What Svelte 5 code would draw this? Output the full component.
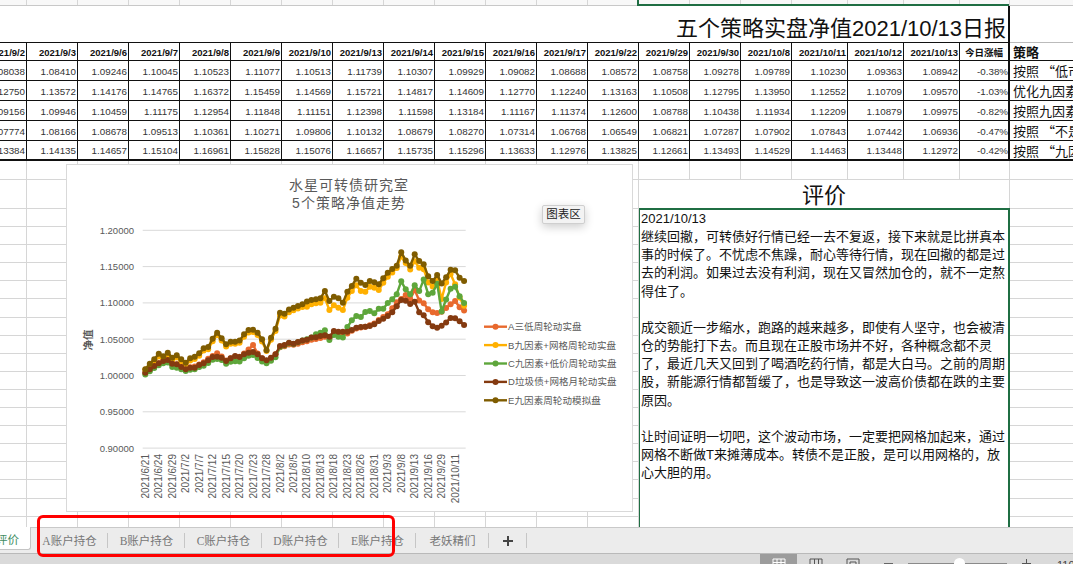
<script>
	const dates = ['9/2','9/3','9/6','9/7','9/8','9/9','9/10','9/13','9/14','9/15','9/16','9/17','9/22','9/29','9/30','10/8','10/11','10/12','10/13'];

	const rows = [
		{ name: 'A三低周轮动实盘', color: '#e8692d', change: '-0.38%', note: '按照 “低市值', values: [1.08038,1.0841,1.09246,1.10045,1.10523,1.11077,1.10513,1.11739,1.10307,1.09929,1.09082,1.08688,1.08572,1.08758,1.09278,1.09789,1.1023,1.09363,1.08942],
			early: [1.003,1.0085,1.013,1.0165,1.0195,1.0205,1.0155,1.015,1.0115,1.0085,1.011,1.012,1.015,1.018,1.0229,1.0265,1.0302,1.026,1.0205,1.0235,1.026,1.0255,1.03,1.0357,1.0417,1.03,1.0235,1.02,1.024,1.029,1.0385,1.04,1.0425,1.042,1.0435,1.0455,1.047,1.049,1.05,1.0515,1.053,1.051,1.058,1.0575,1.057,1.0575,1.0615,1.0645,1.066,1.067,1.069,1.0715,1.076] },
		{ name: 'B九因素+网格周轮动实盘', color: '#ffb000', change: '-1.03%', note: '优化九因素', values: [1.1275,1.13572,1.14176,1.14765,1.16372,1.15459,1.14569,1.15721,1.14817,1.14609,1.1277,1.1224,1.13163,1.10508,1.12795,1.1395,1.12552,1.10709,1.0957],
			early: [1.008,1.013,1.019,1.026,1.023,1.0275,1.0215,1.0245,1.0195,1.0155,1.0205,1.0225,1.027,1.034,1.036,1.047,1.0555,1.048,1.0395,1.0435,1.0435,1.045,1.053,1.059,1.0595,1.0555,1.0465,1.0335,1.049,1.061,1.0825,1.081,1.087,1.0895,1.092,1.094,1.0945,1.0978,1.0991,1.1001,1.106,1.09,1.0964,1.0932,1.09,1.1069,1.1161,1.1239,1.1161,1.1152,1.1221,1.1207,1.1175] },
		{ name: 'C九因素+低价周轮动实盘', color: '#5ea63b', change: '-0.82%', note: '按照九因素', values: [1.09156,1.09946,1.10459,1.11175,1.12954,1.11848,1.11151,1.12398,1.11598,1.13184,1.11167,1.11374,1.126,1.08788,1.10438,1.11934,1.12209,1.10879,1.09975],
			early: [1.001,1.0055,1.01,1.014,1.0165,1.0175,1.0115,1.0105,1.0085,1.006,1.0075,1.0085,1.0115,1.013,1.017,1.0215,1.0225,1.021,1.016,1.0185,1.0195,1.019,1.0235,1.027,1.028,1.024,1.019,1.0165,1.02,1.025,1.039,1.041,1.044,1.043,1.0455,1.048,1.0496,1.0519,1.0564,1.0587,1.062,1.0486,1.0555,1.0532,1.0519,1.0665,1.0757,1.0817,1.0803,1.0872,1.0886,1.0854,1.0918] },
		{ name: 'D垃圾债+网格月轮动实盘', color: '#843a10', change: '-0.47%', note: '按照 “不是', values: [1.07774,1.08166,1.08678,1.09513,1.10361,1.10271,1.09806,1.10132,1.08679,1.0827,1.07314,1.06768,1.06549,1.06821,1.07287,1.07902,1.07843,1.07442,1.06936],
			early: [1.0036,1.0082,1.0128,1.0165,1.0197,1.0211,1.016,1.0151,1.0114,1.0082,1.0105,1.0105,1.0142,1.0165,1.0206,1.0252,1.0257,1.0243,1.0197,1.0234,1.0266,1.0252,1.0289,1.0312,1.0321,1.0289,1.0234,1.0206,1.0243,1.0289,1.0403,1.0417,1.0449,1.0436,1.0459,1.0481,1.049,1.0519,1.0523,1.0541,1.0551,1.0532,1.061,1.0601,1.0601,1.0601,1.0624,1.0656,1.0665,1.067,1.0679,1.0702,1.0748] },
		{ name: 'E九因素周轮动模拟盘', color: '#7f5c00', change: '-0.42%', note: '按照 “九因素', values: [1.13384,1.14135,1.14657,1.15104,1.16961,1.15828,1.15076,1.16657,1.15735,1.15296,1.13633,1.12976,1.13825,1.12661,1.13493,1.14529,1.14463,1.13448,1.12972],
			early: [1.0082,1.016,1.022,1.0298,1.0261,1.0312,1.0243,1.0275,1.022,1.0174,1.0234,1.0257,1.0302,1.0371,1.039,1.0504,1.0587,1.0509,1.0426,1.0463,1.0463,1.0481,1.0564,1.0624,1.0628,1.0587,1.0495,1.0344,1.0518,1.0642,1.0863,1.0849,1.0908,1.0931,1.0954,1.0977,1.1015,1.1037,1.1047,1.106,1.1161,1.1024,1.1083,1.106,1.1001,1.1152,1.123,1.1331,1.1276,1.1244,1.1299,1.1281,1.1253] }
	];

	const xOf = (i) => 145.3 + 4.49 * i;
	const yOf = (v) => 374.3 - (v - 1) * 726;

	const series = rows.map((r) => {
		const pts = r.early.concat(r.values).map((v, i) => [xOf(i), yOf(v)]);
		return { ...r, pts, line: pts.map((p) => p[0].toFixed(1) + ',' + p[1].toFixed(1)).join(' ') };
	});

	const ticks = ['1.20000', '1.15000', '1.10000', '1.05000', '1.00000', '0.95000', '0.90000'];
	const labels = ['6/21','6/24','6/29','7/2','7/7','7/12','7/15','7/20','7/23','7/28','8/2','8/5','8/10','8/13','8/18','8/23','8/26','8/31','9/3','9/8','9/13','9/16','9/29','10/11'];
	const tabs = ['A账户持仓', 'B账户持仓', 'C账户持仓', 'D账户持仓', 'E账户持仓'];

	const colCount = 21;
	const rowCount = 20;
	const cells = [];
	for (let r = 1; r <= rowCount; r++) {
		for (let c = 1; c <= colCount; c++) {
			// columns 14-20 below the table belong to the merged review cells
			if (r >= 2 && c >= 14 && c <= 20) continue;
			cells.push({ key: r + '-' + c, end: c === colCount });
		}
	}
	const stripCells = Array.from({ length: colCount - 1 });

	const review = `2021/10/13
继续回撤，可转债好行情已经一去不复返，接下来就是比拼真本
事的时候了。不忧虑不焦躁，耐心等待行情，现在回撤的都是过
去的利润。如果过去没有利润，现在又冒然加仓的，就不一定熬
得住了。

成交额近一步缩水，跑路的越来越多，即使有人坚守，也会被清
仓的势能打下去。而且现在正股市场并不好，各种概念都不灵
了，最近几天又回到了喝酒吃药行情，都是大白马。之前的周期
股，新能源行情都暂缓了，也是导致这一波高价债都在跌的主要
原因。

让时间证明一切吧，这个波动市场，一定要把网格加起来，通过
网格不断做T来摊薄成本。转债不是正股，是可以用网格的，放
心大胆的用。`;
</script>

<div class="app">
	<div class="strip">
		{#each stripCells as _}
			<div class="cell"></div>
		{/each}
		<div class="strip-green"></div>
	</div>

	<div class="table-wrap">
		<table>
			<colgroup>
				{#each dates as d, i}
					<col class={i >= 16 ? 'wide' : ''} />
				{/each}
				<col class="pct" />
				<col class="note" />
			</colgroup>
			<tbody>
				<tr class="title-row">
					<td class="title" colspan="20">五个策略实盘净值2021/10/13日报</td>
					<td class="blank"></td>
				</tr>
				<tr class="head">
					{#each dates as d}
						<th>2021/{d}</th>
					{/each}
					<th class="pct-head">今日涨幅</th>
					<th class="note-head">策略</th>
				</tr>
				{#each rows as r}
					<tr>
						{#each r.values as v}
							<td>{v.toFixed(5)}</td>
						{/each}
						<td class="change">{r.change}</td>
						<td class="note-cell">{r.note}</td>
					</tr>
				{/each}
			</tbody>
		</table>
	</div>

	<div class="lower">
		<div class="grid">
			<div class="review-title">评价</div>
			<div class="review">{review}</div>
			{#each cells as cell (cell.key)}
				<div class="cell" class:end={cell.end}></div>
			{/each}
		</div>

		<div class="chart">
			<svg width="565" height="346" viewBox="67 164 565 346">
				<g class="chart-title">
					<text x="349" y="189">水星可转债研究室</text>
					<text x="349" y="207">5个策略净值走势</text>
				</g>
				{#each ticks as t, i}
					<line class="gridline" x1="142.7" x2="465.7" y1={229.3 + i * 36.3} y2={229.3 + i * 36.3} />
					<text class="tick" x="134" y={232.8 + i * 36.3}>{t}</text>
				{/each}
				<text class="axis-title" transform="translate(92 339) rotate(-90)">净值</text>
				{#each labels as l, i}
					<text class="date" transform="translate({xOf(i * 3) + 3.5} 453) rotate(-90)">2021/{l}</text>
				{/each}
				{#each series as s}
					<polyline points={s.line} fill="none" stroke={s.color} stroke-width="2.4" stroke-linejoin="round" />
					{#each s.pts as p}
						<circle cx={p[0]} cy={p[1]} r="3" fill={s.color} />
					{/each}
				{/each}
				{#each series as s, i}
					<line x1="484" x2="507" y1={325.7 + i * 18.4} y2={325.7 + i * 18.4} stroke={s.color} stroke-width="2.4" />
					<circle cx="495.5" cy={325.7 + i * 18.4} r="3" fill={s.color} />
					<text class="legend" x="508" y={329.2 + i * 18.4}>{s.name}</text>
				{/each}
			</svg>
			<div class="tip">图表区</div>
		</div>
	</div>

	<div class="tabs">
		<div class="tab active"><span>评价</span></div>
		{#each tabs as t}
			<div class="tab">{t}</div>
		{/each}
		<div class="tab last">老妖精们</div>
		<div class="tab add">
			<svg width="12" height="12" viewBox="0 0 12 12"><path d="M6 1v10M1 6h10" stroke="#444" stroke-width="2" /></svg>
		</div>
	</div>

	<div class="status">
		<div class="view on">
			<svg width="14" height="12" viewBox="0 0 14 12"><path d="M1 1h12v11H1zM1 4.5h12M1 8h12M5 1v11M9 1v11" fill="none" stroke="#fff" /></svg>
		</div>
		<div class="view">
			<svg width="14" height="12" viewBox="0 0 14 12"><path d="M1 1h12v11H1zM5.5 1v11M9.5 1v11" fill="none" stroke="#555" /></svg>
		</div>
		<div class="view">
			<svg width="14" height="12" viewBox="0 0 14 12"><path d="M1 1h12v11H1zM4 4h6v8H4z" fill="none" stroke="#555" /></svg>
		</div>
		<div class="zoom">
			<span class="minus"></span>
			<div class="slider"><span class="knob"></span></div>
			<span class="plus"></span>
			<span class="percent">110%</span>
		</div>
	</div>

	<div class="mark"></div>
</div>

<style>
	:global(body) {
		margin: 0;
		background: #fff;
	}

	.app {
		position: relative;
		width: 1073px;
		height: 564px;
		display: flex;
		flex-direction: column;
		overflow: hidden;
		font-family: 'Liberation Sans', 'Noto Sans CJK SC', sans-serif;
		color: #111;
	}

	.strip {
		position: relative;
		flex: none;
		height: 6px;
		display: grid;
		grid-template-columns: 27px repeat(15, 51px) repeat(3, 56px) 50px 1fr;
		background: #f8f8f8;
		border-bottom: 1px solid #c8c8c8;
		box-sizing: border-box;
	}

	.strip-green {
		position: absolute;
		left: 637px;
		top: 0;
		width: 372px;
		height: 6px;
		box-sizing: border-box;
		border-left: 2px solid #1f6e43;
		border-bottom: 2px solid #1f6e43;
	}

	.table-wrap {
		flex: none;
		height: 155px;
		overflow: hidden;
	}

	table {
		margin-left: -24px;
		width: 1097px;
		table-layout: fixed;
		border-collapse: separate;
		border-spacing: 0;
	}

	col {
		width: 51px;
	}

	col.wide {
		width: 56px;
	}

	col.pct {
		width: 50px;
	}

	col.note {
		width: 63px;
	}

	td,
	th {
		box-sizing: border-box;
		height: 20px;
		padding: 2px 1px 0 0;
		border-right: 1px solid #111;
		border-bottom: 1px solid #111;
		text-align: right;
		font-size: 9.8px;
		line-height: 16px;
		font-weight: 400;
		color: #333;
		white-space: nowrap;
		overflow: hidden;
	}

	.title-row td {
		height: 37px;
		border-right: none;
	}

	.title-row td.blank {
		border-bottom-color: #bbb;
	}

	td.title {
		border-right: 2px solid #111;
		padding: 9px 2px 0 0;
		font-size: 22px;
		line-height: 26px;
		color: #111;
	}

	.head th {
		height: 18px;
		padding-top: 2px;
		font-size: 9.5px;
		line-height: 15px;
		font-weight: 700;
		color: #111;
	}

	.head th.pct-head {
		text-align: center;
		border-right: 2px solid #111;
		padding: 2px 0 0;
	}

	.head th.note-head {
		text-align: left;
		padding: 1px 0 0 3px;
		font-size: 13px;
		border-right: none;
	}

	td.change {
		padding: 2px 0 0;
		border-right: 2px solid #111;
	}

	td.note-cell {
		text-align: left;
		padding: 1px 0 0 3px;
		font-family: 'Noto Sans CJK SC', sans-serif;
		font-size: 13px;
		color: #111;
		border-right: none;
	}

	tr:last-child td {
		border-bottom-width: 2px;
	}

	.lower {
		position: relative;
		flex: 1;
		overflow: hidden;
	}

	.grid {
		display: grid;
		grid-template-columns: 27px repeat(15, 51px) repeat(3, 56px) 50px 1fr;
		grid-template-rows: 19px 29px repeat(18, 18.1px);
		height: 100%;
		overflow: hidden;
	}

	.cell {
		box-sizing: border-box;
		border-right: 1px solid #d6d6d6;
		border-bottom: 1px solid #d6d6d6;
	}

	.strip .cell {
		border-bottom: none;
	}

	.cell.end {
		border-right: none;
	}

	.review-title {
		grid-column: 14 / 21;
		grid-row: 2;
		text-align: center;
		font-size: 22px;
		line-height: 31px;
		color: #111;
		border-right: 1px solid #d6d6d6;
	}

	.review {
		grid-column: 14 / 21;
		grid-row: 3 / 21;
		box-sizing: border-box;
		margin: -1px 0 0 -1px;
		padding: 0 0 0 1px;
		border: 2px solid #1f6e43;
		font-size: 13px;
		line-height: 18.15px;
		color: #111;
		white-space: pre;
		overflow: hidden;
		background: #fff;
	}

	.chart {
		position: absolute;
		left: 66px;
		top: 3px;
		width: 567px;
		height: 348px;
		box-sizing: border-box;
		background: #fff;
		border: 1px solid #d9d9d9;
	}

	.chart svg {
		display: block;
	}

	.chart-title text {
		font-size: 14px;
		letter-spacing: 1px;
		fill: #595959;
		text-anchor: middle;
	}

	.gridline {
		stroke: #d9d9d9;
		stroke-width: 1;
	}

	.tick {
		font-size: 9.5px;
		fill: #595959;
		text-anchor: end;
	}

	.axis-title {
		font-size: 10.5px;
		font-weight: 700;
		fill: #595959;
		text-anchor: middle;
	}

	.date {
		font-size: 10px;
		fill: #595959;
		text-anchor: end;
	}

	.legend {
		font-size: 9.5px;
		letter-spacing: 0.1px;
		fill: #595959;
	}

	.tip {
		position: absolute;
		left: 475px;
		top: 40px;
		width: 43px;
		height: 19px;
		box-sizing: border-box;
		background: #f3f3f3;
		border: 1px solid #cfcfcf;
		border-radius: 2px;
		box-shadow: 0 3px 10px rgba(0, 0, 0, 0.2);
		font-size: 11.5px;
		line-height: 17px;
		text-align: center;
		color: #222;
	}

	.tabs {
		flex: none;
		height: 26px;
		box-sizing: border-box;
		display: flex;
		background: #ececec;
		border-top: 1px solid #c9c9c9;
		font-family: 'Liberation Serif', 'Noto Sans CJK SC', serif;
	}

	.tab {
		position: relative;
		flex: none;
		box-sizing: border-box;
		width: 77px;
		text-align: center;
		font-size: 11.5px;
		line-height: 26px;
		color: #777;
	}

	.tab::after {
		content: '';
		position: absolute;
		right: 0;
		top: 5px;
		height: 15px;
		border-right: 1px solid #c6c6c6;
	}

	.tab.active {
		width: 31px;
		margin-bottom: 3px;
		margin-top: -1px;
		background: #fff;
		border-radius: 0 0 3px 0;
		border-right: 1px solid #c4c4c4;
		border-bottom: 1px solid #c4c4c4;
		text-align: right;
		padding-right: 11px;
		color: #3f8d5f;
		overflow: hidden;
		white-space: nowrap;
	}

	.tab.active span {
		display: inline-block;
		width: 23px;
		margin-left: -10px;
		letter-spacing: 0;
	}

	.tab.active::after {
		display: none;
	}

	.tab.last {
		width: 73px;
	}

	.tab.add {
		width: 38px;
		display: flex;
		align-items: center;
		justify-content: center;
	}

	.status {
		flex: none;
		height: 11px;
		box-sizing: border-box;
		display: flex;
		padding-left: 760px;
		background: #dadada;
		border-top: 1px solid #b9b9b9;
		overflow: hidden;
	}

	.view {
		flex: none;
		width: 37px;
		display: flex;
		justify-content: center;
		padding-top: 4px;
		box-sizing: border-box;
	}

	.view.on {
		background: #9c9c9c;
	}

	.zoom {
		display: flex;
		align-items: flex-start;
		margin-left: 13px;
	}

	.minus {
		flex: none;
		width: 9px;
		height: 1px;
		margin-top: 9px;
		background: #666;
	}

	.slider {
		position: relative;
		flex: none;
		width: 99px;
		height: 1px;
		margin: 9px 0 0 15px;
		background: #8a8a8a;
	}

	.knob {
		position: absolute;
		left: 46px;
		top: -5px;
		width: 11px;
		height: 11px;
		border-radius: 50%;
		background: #fff;
	}

	.plus {
		flex: none;
		width: 9px;
		height: 9px;
		margin: 5px 0 0 15px;
		background: linear-gradient(#555, #555) center / 100% 1px no-repeat, linear-gradient(#555, #555) center / 1px 100% no-repeat;
	}

	.percent {
		flex: none;
		margin: 5px 0 0 26px;
		font-size: 11px;
		color: #444;
		white-space: nowrap;
	}

	.mark {
		position: absolute;
		left: 37px;
		top: 515px;
		width: 358px;
		height: 42px;
		box-sizing: border-box;
		border: 3.5px solid #f00;
		border-radius: 6px;
	}
</style>
